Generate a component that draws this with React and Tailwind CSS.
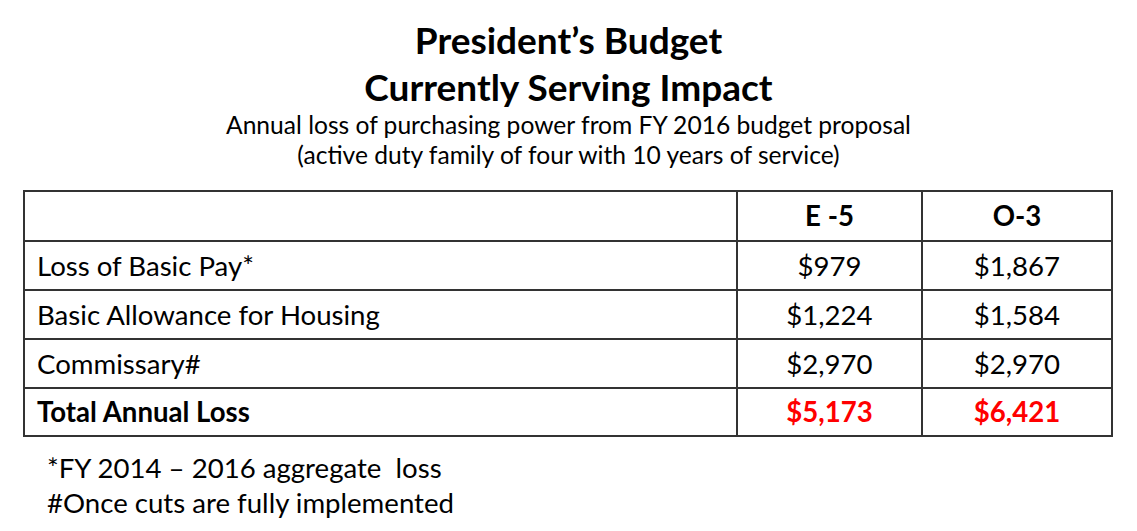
import React from "react";

const rows = [
  ["Loss of Basic Pay*", "$979", "$1,867"],
  ["Basic Allowance for Housing", "$1,224", "$1,584"],
  ["Commissary#", "$2,970", "$2,970"],
];

export default function App() {
  return (
    <div
      className="w-[1137px] h-[531px] bg-white text-black overflow-hidden flex flex-col"
      style={{ fontFamily: "Lato, 'Open Sans', sans-serif" }}
    >
      <div className="flex flex-col items-center pt-[16px]">
        <div className="text-[37px] font-bold leading-[48px]">President’s Budget</div>
        <div className="text-[37px] font-bold leading-[46px]">Currently Serving Impact</div>
        <div className="text-[24.6px] leading-[30px]">
          Annual loss of purchasing power from FY 2016 budget proposal
        </div>
        <div className="text-[24.6px] leading-[30px]">
          (active duty family of four with 10 years of service)
        </div>
      </div>
      <div className="ml-[23px] mt-[20px] w-[1090px] border-2 border-[#333] grid grid-cols-[713px_185px_1fr] text-[27.6px]">
        <div className="h-[48px] border-r-2 border-[#333]"></div>
        <div className="h-[48px] border-r-2 border-[#333] flex items-center justify-center font-bold">E -5</div>
        <div className="h-[48px] flex items-center justify-center font-bold">O-3</div>
        {rows.map((r) => (
          <React.Fragment key={r[0]}>
            <div className="h-[49px] border-t-2 border-r-2 border-[#333] flex items-center pl-[12px]">{r[0]}</div>
            <div className="h-[49px] border-t-2 border-r-2 border-[#333] flex items-center justify-center">{r[1]}</div>
            <div className="h-[49px] border-t-2 border-[#333] flex items-center justify-center">{r[2]}</div>
          </React.Fragment>
        ))}
        <div className="h-[48px] border-t-2 border-r-2 border-[#333] flex items-center pl-[12px] font-bold">Total Annual Loss</div>
        <div className="h-[48px] border-t-2 border-r-2 border-[#333] flex items-center justify-center font-bold text-[#ff0000]">$5,173</div>
        <div className="h-[48px] border-t-2 border-[#333] flex items-center justify-center font-bold text-[#ff0000]">$6,421</div>
      </div>
      <div className="pl-[47px] pt-[13px] text-[27.6px] leading-[35px]">
        <div>*FY 2014 – 2016 aggregate&nbsp; loss</div>
        <div>#Once cuts are fully implemented</div>
      </div>
    </div>
  );
}
